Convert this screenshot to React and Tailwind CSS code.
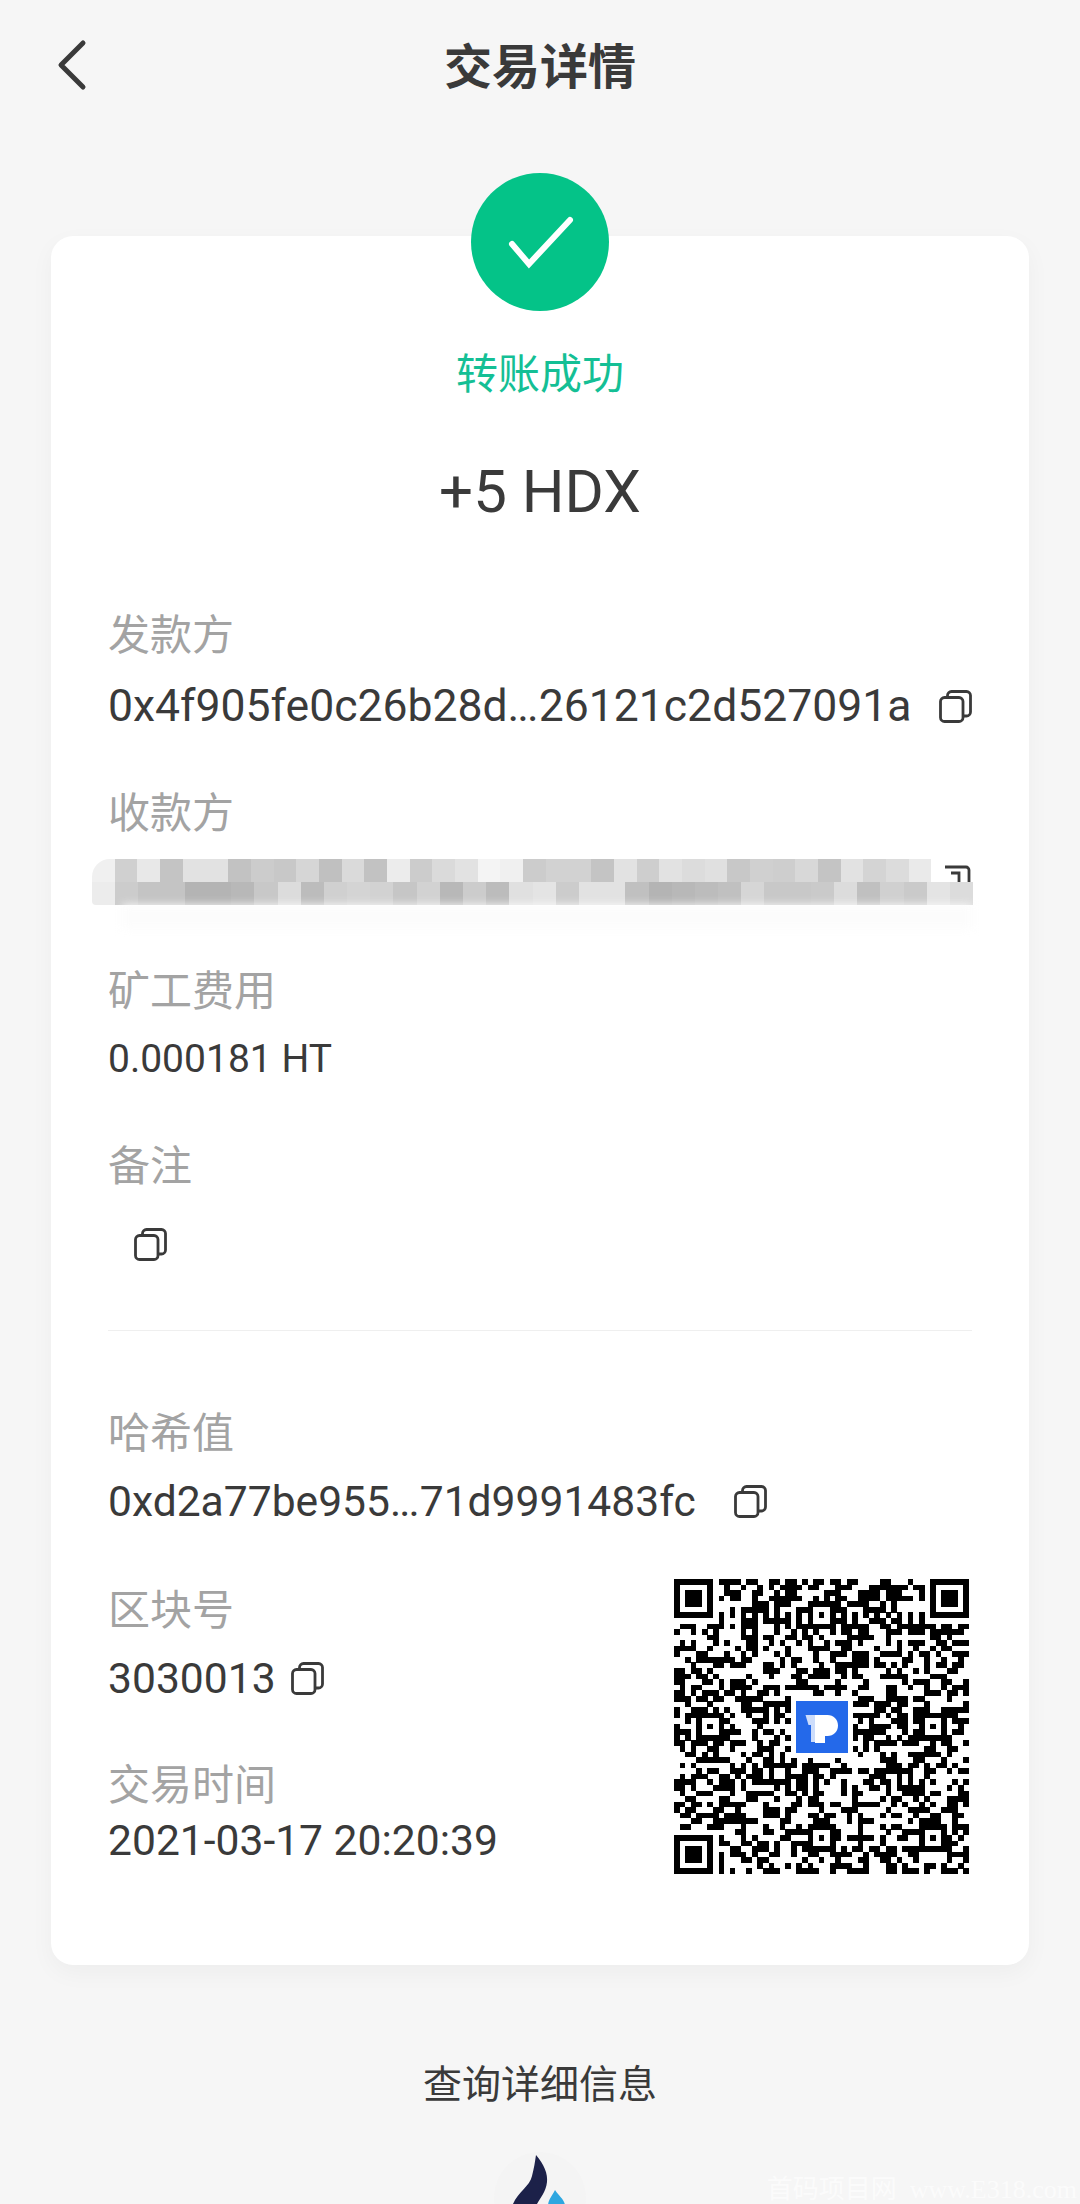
const sans = "font-['Roboto','Noto_Sans_CJK_SC',sans-serif]";

function CopyIcon({ className = "" }) {
  return (
    <svg width="33" height="33" viewBox="0 0 33 33" fill="none" stroke="#3a3a3a" strokeWidth="2.8" className={`shrink-0 ${className}`}>
      <rect x="1.5" y="7.5" width="22.5" height="24" rx="4" />
      <path d="M8.5 7.5V5.5a4 4 0 0 1 4-4H27.5a4 4 0 0 1 4 4V22a4 4 0 0 1-4 4H24" />
    </svg>
  );
}

function Label({ children, className = "" }) {
  return <div className={`h-[56px] flex items-center text-[42px] leading-[56px] text-[#a3a3a3] ${className}`}>{children}</div>;
}

function Value({ children, className = "" }) {
  return <div className={`h-[56px] flex items-center leading-[56px] text-[#3a3a3a] whitespace-nowrap ${className}`}>{children}</div>;
}

function Dots() {
  return <span className="tracking-[-2px] mr-[2px]">...</span>;
}

const topRow = ["#f0f0f0","#d0d0d0","#e8e8e8","#c4c4c4","#e2e2e2","#e2e2e2","#c2c2c2","#cccccc","#c8c8c8","#d6d6d6","#c0c0c0","#dadada","#c2c2c2","#ececec","#cccccc","#dadada","#e2e2e2","#f4f4f4","#f0f0f0","#cccccc","#d2d2d2","#d2d2d2","#c4c4c4","#e2e2e2","#cecece","#e2e2e2","#dcdcdc","#e0e0e0","#c8c8c8","#d0d0d0","#cecece","#d8d8d8","#c4c4c4","#e2e2e2","#d4d4d4","#dcdcdc","#eaeaea"];
const bottomRow = ["#ececec","#cccccc","#c4c4c4","#c4c4c4","#b4b4b4","#b4b4b4","#b8b8b8","#c8c8c8","#dcdcdc","#bcbcbc","#d0d0d0","#d4d4d4","#d2d2d2","#c6c6c6","#d2d2d2","#b8b8b8","#cccccc","#bcbcbc","#e0e0e0","#e4e4e4","#cccccc","#e2e2e2","#e2e2e2","#c0c0c0","#b4b4b4","#b8b8b8","#bcbcbc","#c0c0c0","#d6d6d6","#c8c8c8","#c8c8c8","#cacaca","#dcdcdc","#c0c0c0","#d0d0d0","#cacaca","#e4e4e4","#dcdcdc"];

function BlurBar() {
  return (
    <div className="relative mt-[17px] -ml-[16px] h-[46px] w-[880px] flex flex-col">
      <div className="absolute left-[30px] right-0 top-[46px] h-[24px] bg-[#fcfcfc] blur-[5px]" />
      <div className="flex h-[23px] w-full">
        {topRow.map((c, i) => (
          <div key={i} className="h-full w-[22.7px] shrink-0 first:rounded-tl-[18px]" style={{ backgroundColor: c }} />
        ))}
      </div>
      <div className="flex h-[23px] w-full">
        {bottomRow.map((c, i) => (
          <div key={i} className="h-full w-[23.2px] shrink-0 first:rounded-bl-[4px]" style={{ backgroundColor: c }} />
        ))}
      </div>
      <svg width="30" height="23" viewBox="0 0 30 23" fill="none" stroke="#3a3a3a" strokeWidth="2.8" className="absolute right-0 top-0">
        <path d="M3 8H24a3 3 0 0 1 3 3V23" />
        <path d="M9 14H17V23" />
      </svg>
    </div>
  );
}

function QR() {
  const n = 53;
  const cells = [];
  let s = 91283;
  const rnd = () => {
    s = (s * 1664525 + 1013904223) % 4294967296;
    return ((s >>> 13) % 1000) / 1000;
  };
  const inFinder = (r, c) => (r < 8 && c < 8) || (r < 8 && c >= n - 8) || (r >= n - 8 && c < 8);
  const aligns = [6, 26, 46];
  for (let r = 0; r < n; r++) {
    for (let c = 0; c < n; c++) {
      const v = rnd();
      if (inFinder(r, c)) continue;
      let on = v < 0.5;
      if (r === 6 || c === 6) on = (r + c) % 2 === 0;
      for (const ar of aligns) {
        for (const ac of aligns) {
          if ((ar === 6 && ac === 46) || (ar === 46 && ac === 6) || (ar === 6 && ac === 6)) continue;
          if (Math.abs(r - ar) <= 2 && Math.abs(c - ac) <= 2) {
            const d = Math.max(Math.abs(r - ar), Math.abs(c - ac));
            on = d !== 1;
          }
        }
      }
      if (on) cells.push(<rect key={`${r}-${c}`} x={c} y={r} width="1.02" height="1.02" />);
    }
  }
  const finder = (x, y) => (
    <g key={`${x}-${y}`}>
      <path fillRule="evenodd" d={`M${x} ${y}h7v7h-7zM${x + 1} ${y + 1}v5h5v-5z`} />
      <rect x={x + 2} y={y + 2} width="3" height="3" />
    </g>
  );
  return (
    <div className="relative mt-[50px] mr-[3px] w-[295px] h-[295px] shrink-0">
      <svg width="295" height="295" viewBox="0 0 53 53" fill="#000" shapeRendering="crispEdges">
        {cells}
        {finder(0, 0)}
        {finder(46, 0)}
        {finder(0, 46)}
      </svg>
      <div className="absolute left-[117px] top-[117px] w-[62px] h-[62px] bg-white flex items-center justify-center">
        <svg width="52" height="52" viewBox="0 0 52 52">
          <rect width="52" height="52" fill="#2469ea" />
          <path d="M9.5 14H19V24H12.5Z" fill="#cdddfb" />
          <path d="M15 24H19V41H15Z" fill="#cdddfb" />
          <path d="M19 14H31.5C37.5 14 42 18.5 42 24.5S37.5 35 31.5 35H29V42H19Z" fill="#fff" />
        </svg>
      </div>
    </div>
  );
}

export default function App() {
  return (
    <div className={`relative h-[2204px] w-[1080px] overflow-hidden bg-[#f6f6f6] ${sans}`}>
      <header className="relative flex h-[130px] items-center justify-center pt-[5px]">
        <svg width="34" height="54" viewBox="0 0 34 54" fill="none" stroke="#3a3a3a" strokeWidth="5" strokeLinecap="round" strokeLinejoin="round" className="absolute left-[55px] top-[38px]">
          <path d="M28 5 L6 27 L28 49" />
        </svg>
        <h1 className="text-[48px] font-bold leading-[56px] text-[#3a3a3a]">交易详情</h1>
      </header>

      <main className="relative mx-[51px] mt-[106px] h-[1729px] rounded-[22px] bg-white pl-[57px] pr-[57px] pt-[111px] shadow-[0_8px_24px_rgba(0,0,0,0.04)]">
        <div className="absolute left-1/2 top-[-63px] flex h-[138px] w-[138px] -translate-x-1/2 items-center justify-center rounded-full bg-[#04c388]">
          <svg width="70" height="56" viewBox="0 0 70 56" fill="none" stroke="#fff" strokeWidth="6" strokeLinecap="round" strokeLinejoin="miter">
            <path d="M7 30 L24 50 L65 6" />
          </svg>
        </div>

        <div className="h-[56px] text-center text-[42px] leading-[56px] text-[#14bf95]">转账成功</div>
        <div className="mt-[49px] h-[80px] text-center text-[60px] leading-[80px] text-[#3a3a3a]">+5 HDX</div>

        <Label className="mt-[76px]">发款方</Label>
        <Value className="mt-[14px] justify-between text-[44.5px]">
          <span>0x4f905fe0c26b28d<Dots />26121c2d527091a</span>
          <CopyIcon />
        </Value>

        <Label className="mt-[52px]">收款方</Label>
        <BlurBar />

        <Label className="mt-[59px]">矿工费用</Label>
        <Value className="mt-[11px] text-[39px]">0.000181 HT</Value>

        <Label className="mt-[52px]">备注</Label>
        <div className="mt-[21px] flex h-[56px] items-center pl-[26px]">
          <CopyIcon />
        </div>

        <div className="mt-[58px] h-px bg-[#efefef]" />

        <Label className="mt-[75px]">哈希值</Label>
        <Value className="mt-[11px] text-[42.6px]">
          <span>0xd2a77be955<Dots />71d9991483fc</span>
          <CopyIcon className="ml-[38px]" />
        </Value>

        <div className="flex justify-between">
          <div className="pt-[54px]">
            <Label>区块号</Label>
            <Value className="mt-[11px] text-[42.6px]">
              <span>3030013</span>
              <CopyIcon className="ml-[15px]" />
            </Value>
            <Label className="mt-[52px]">交易时间</Label>
            <Value className="-mt-[2px] text-[42.6px]">2021-03-17 20:20:39</Value>
          </div>
          <QR />
        </div>
      </main>

      <div className="mt-[92px] h-[56px] text-center text-[39px] leading-[56px] text-[#3a3a3a]">查询详细信息</div>

      <div className="mx-auto mt-[39px] h-[92px] w-[92px] rounded-full bg-[#f4f4f4]">
        <svg width="92" height="92" viewBox="0 0 92 92">
          <path d="M42 3C50 12 54 22 53 30C52 40 46 46 43 52H19C24 40 36 34 38 24C40 16 41 10 42 3Z" fill="#1c2149" />
          <path d="M61 38C65 44 71 48 71 54H54C54 48 58 44 61 38Z" fill="#2ea7e0" />
        </svg>
      </div>

      <div className="absolute bottom-[1px] right-[3px] font-['Liberation_Serif','Noto_Sans_CJK_SC',serif] text-[26px] leading-[26px] text-white/60 whitespace-pre">
        首码项目网  www.E318.com
      </div>
    </div>
  );
}
